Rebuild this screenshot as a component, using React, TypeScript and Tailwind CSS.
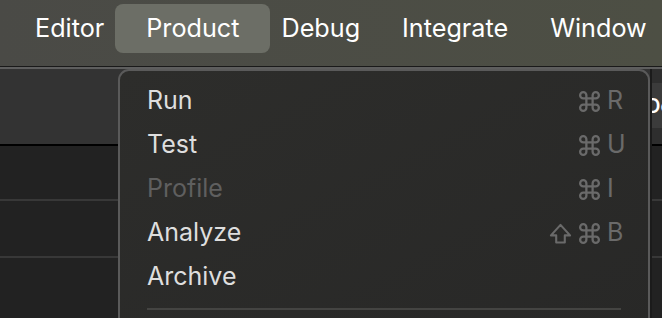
import React from 'react';

const menuBar = ['Editor', 'Product', 'Debug', 'Integrate', 'Window'];

type Item = { label: string; mods?: ('shift' | 'cmd')[]; keyChar?: string; disabled?: boolean };

const items: Item[] = [
  { label: 'Run', mods: ['cmd'], keyChar: 'R' },
  { label: 'Test', mods: ['cmd'], keyChar: 'U' },
  { label: 'Profile', mods: ['cmd'], keyChar: 'I', disabled: true },
  { label: 'Analyze', mods: ['shift', 'cmd'], keyChar: 'B' },
  { label: 'Archive' },
];

function CmdIcon() {
  return (
    <svg width="25" height="25" viewBox="0 0 24 24" fill="none" stroke="currentColor" strokeWidth="2.2" strokeLinecap="round" strokeLinejoin="round">
      <path d="M15 6v12a3 3 0 1 0 3-3H6a3 3 0 1 0 3 3V6a3 3 0 1 0-3 3h12a3 3 0 1 0-3-3" />
    </svg>
  );
}

function ShiftIcon() {
  return (
    <svg width="23" height="21" viewBox="0 0 24 22" fill="none" stroke="currentColor" strokeWidth="2.2" strokeLinejoin="round">
      <path d="M7.5 20.5v-7.5H2L12 2l10 11h-5.5v7.5z" />
    </svg>
  );
}

export default function App() {
  return (
    <div className="relative w-[662px] h-[318px] overflow-hidden bg-[#222222] font-['Inter',sans-serif]">
      {/* menu bar */}
      <div className="flex h-[66px] items-start pt-[4px] pl-[14px] bg-gradient-to-r from-[#4a4a46] to-[#4d4f44] text-white text-[25.2px]">
        {menuBar.map((m) =>
          m === 'Product' ? (
            <span key={m} className="h-[49px] flex items-center px-[31px] -mx-[10px] rounded-[8px] bg-[#6c6e66]">
              {m}
            </span>
          ) : (
            <span key={m} className="h-[49px] flex items-center px-[21px] whitespace-nowrap">
              {m}
            </span>
          )
        )}
      </div>
      <div className="h-px bg-[#1a1a1a]" />
      <div className="h-[2px] bg-[#5e5e5e]" />

      {/* window content behind the menu */}
      <div className="flex">
        <div className="flex-1 flex flex-col">
          <div className="h-[77px] bg-[#333333] border-b-2 border-black" />
          <div className="h-[55px] border-b-2 border-[#383838]" />
          <div className="h-[57px] border-b-2 border-[#383838]" />
          <div className="h-[60px]" />
        </div>
        <div className="w-[12px] flex flex-col border-l-2 border-[#1b1b1b]">
          <div className="h-[14px] bg-[#2e2e2e]" />
          <div className="h-[45px] bg-[#3b3b3b] overflow-hidden flex items-center text-white text-[20px] font-semibold">
            <span className="-ml-[6px]">De</span>
          </div>
          <div className="h-[18px] bg-[#2e2e2e] border-b-2 border-black" />
          <div className="h-[55px] border-b-2 border-[#383838]" />
          <div className="h-[57px] border-b-2 border-[#383838]" />
        </div>
      </div>

      {/* dropdown */}
      <div className="absolute left-[118px] top-[69px] w-[532px] h-[280px] rounded-[11px] border-2 border-[#5a5a5a] bg-gradient-to-br from-[#2d2d2b] to-[#282827] pt-[8px] pl-[27px] pr-[24px]">
        {items.map((it) => (
          <div
            key={it.label}
            className={`h-[44px] flex items-center text-[25px] ${it.disabled ? 'text-[#5f5f5f]' : 'text-[#dedede]'}`}
          >
            <span className="flex-1">{it.label}</span>
            {it.keyChar && (
              <span className="flex items-center text-[#6a6a6a]">
                <span className="flex items-center gap-[5px]">
                  {it.mods?.map((md) => (md === 'cmd' ? <CmdIcon key={md} /> : <ShiftIcon key={md} />))}
                </span>
                <span className="w-[17px] ml-[5px]">{it.keyChar}</span>
              </span>
            )}
          </div>
        ))}
        <div className="mt-[9px] mr-[3px] h-[2px] bg-[#444442]" />
      </div>
    </div>
  );
}
